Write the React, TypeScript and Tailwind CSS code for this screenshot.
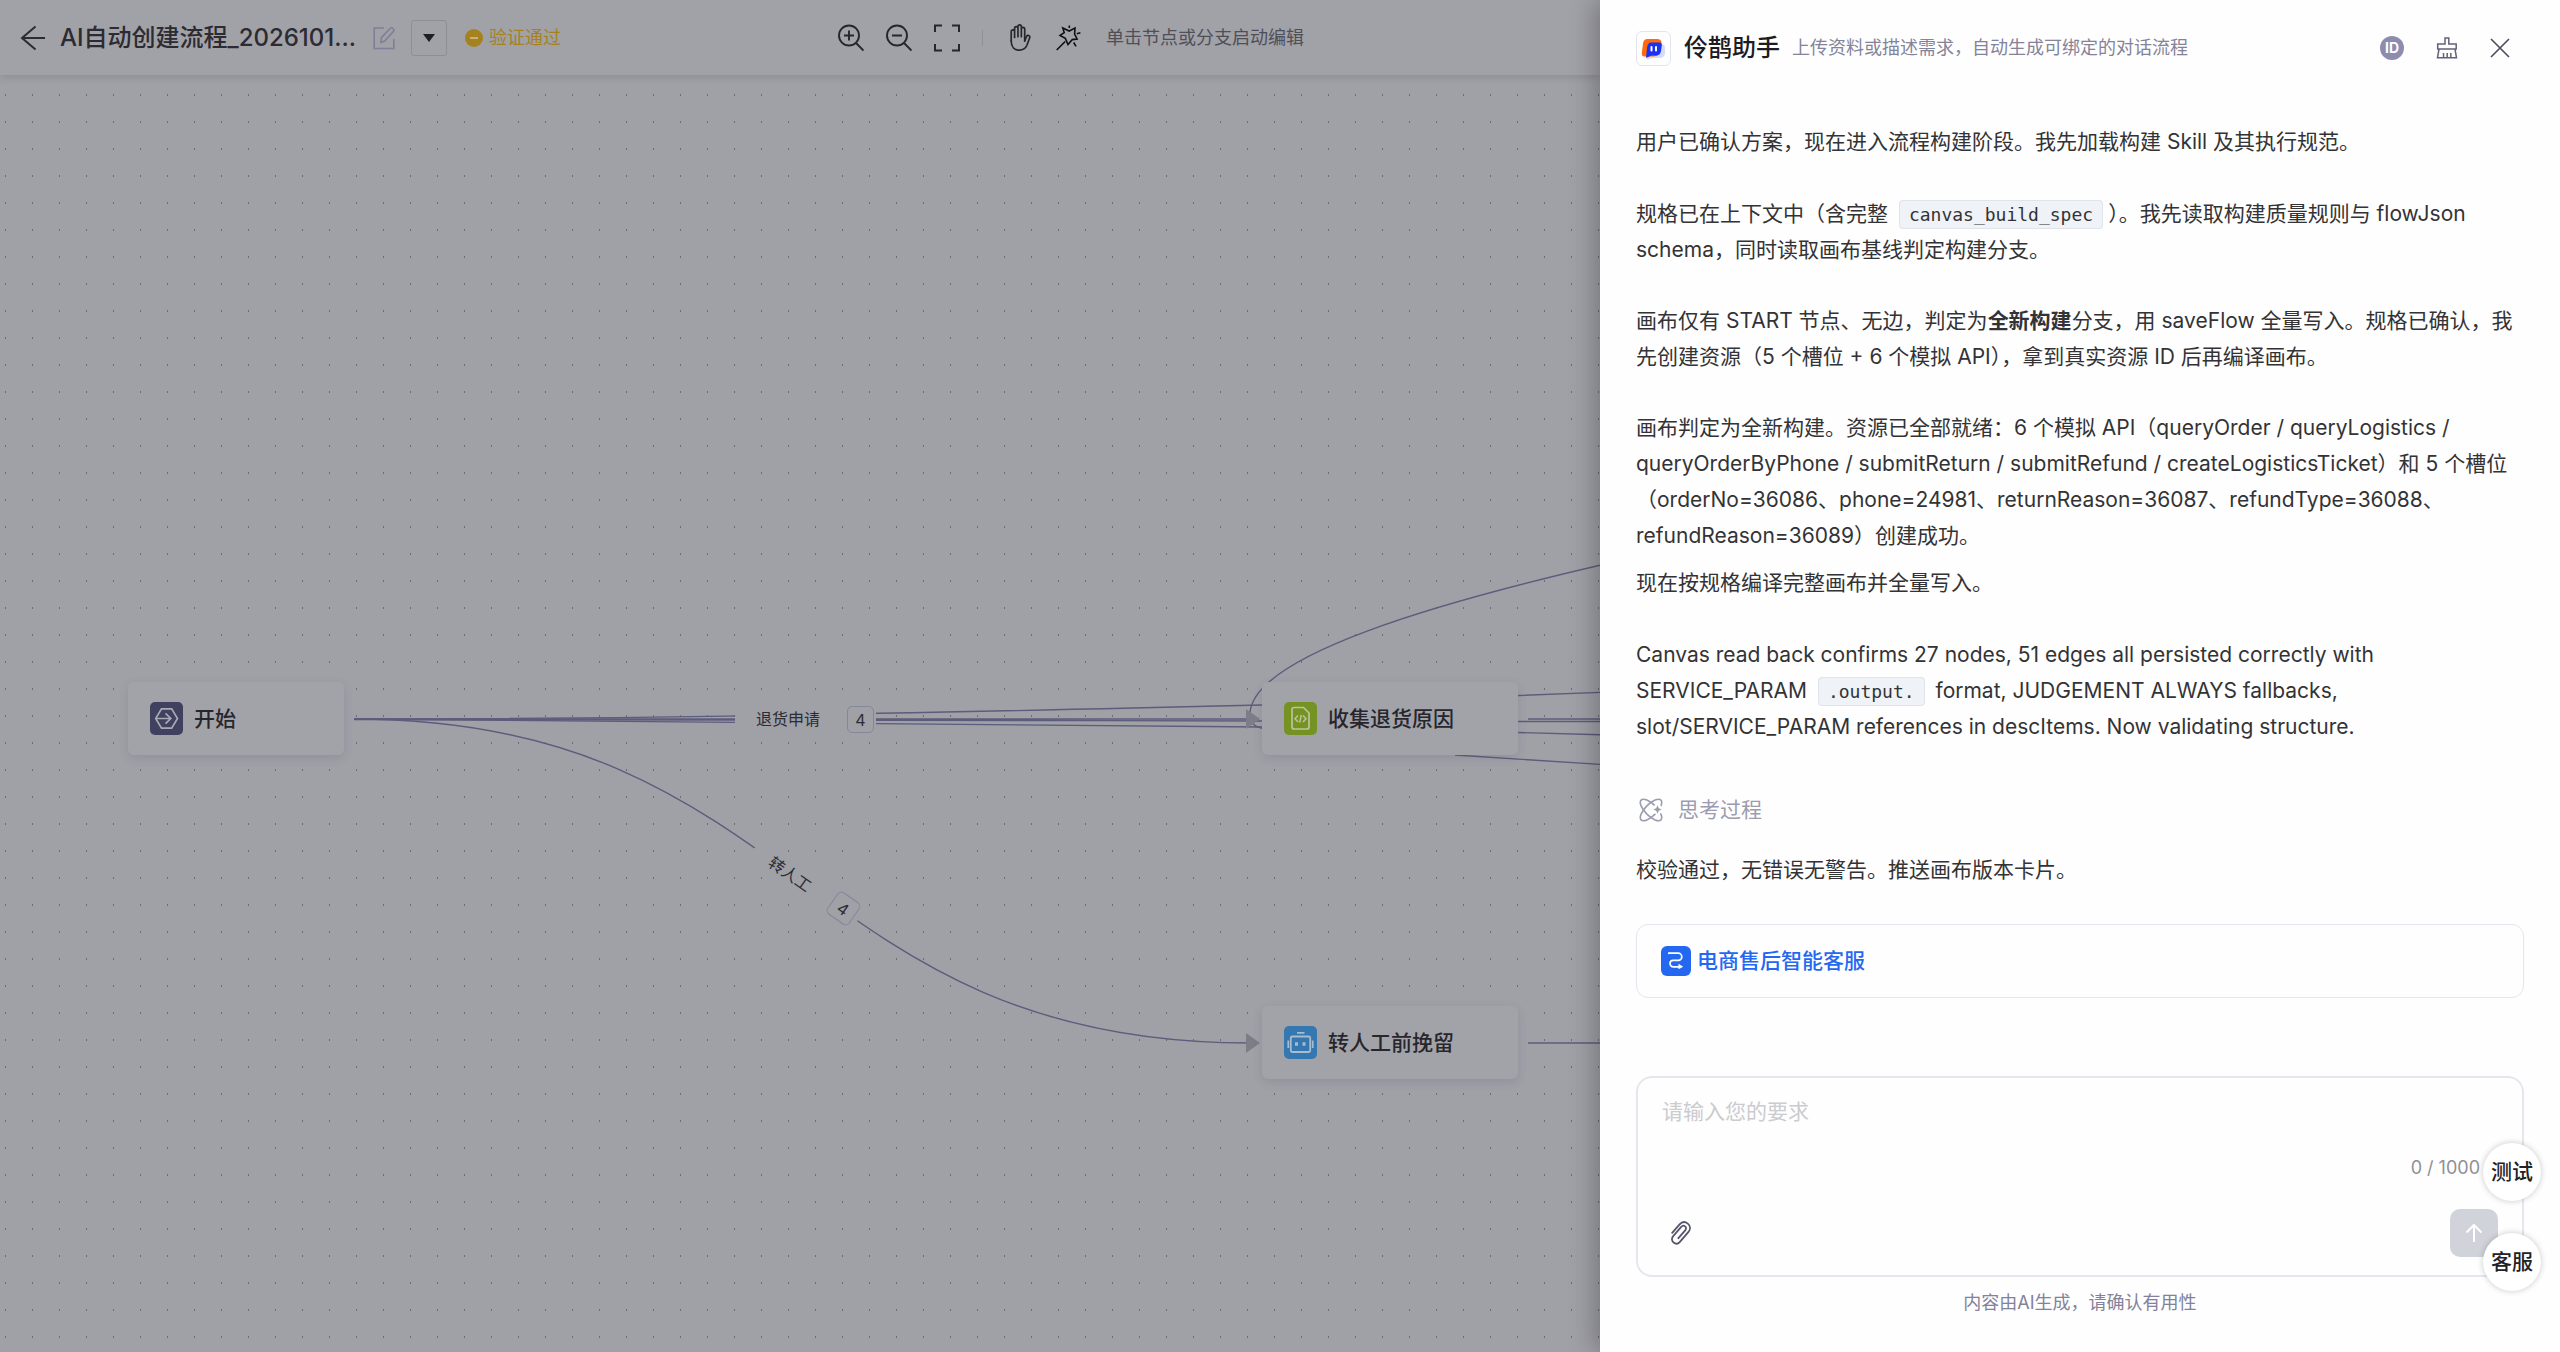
import type { ReactNode } from "react";
import { IoHandLeftOutline } from "react-icons/io5";

function ArrowLeftIcon() {
  return (
    <svg width="25" height="26" viewBox="0 0 25 26" fill="none" stroke="#2b2b31" strokeWidth="2">
      <path d="M15.500 1.500 2 13l13.500 11.500M2 13h23" />
    </svg>
  );
}

function EditIcon() {
  return (
    <svg width="22" height="24" viewBox="0 0 22 24" fill="none" stroke="#7f7f98" strokeWidth="1.6">
      <path d="M11 2H1.200v20.500h19.600V13" />
      <path d="m8 16.500.4-4.800L17.300 2.300a1.600 1.600 0 0 1 2.400 0l.7.7a1.600 1.600 0 0 1 0 2.400L11.700 15 8 16.500Z" />
    </svg>
  );
}

function ZoomIcon({ plus }: { plus?: boolean }) {
  return (
    <svg width="26" height="28" viewBox="0 0 26 28" fill="none" stroke="#26262b" strokeWidth="1.900">
      <circle cx="11" cy="11.500" r="10" />
      <path d="m18 19 7.500 7.500M6 11.500h10" />
      {plus && <path d="M11 6.500v10" />}
    </svg>
  );
}

function FullscreenIcon() {
  return (
    <svg width="26" height="28" viewBox="0 0 26 28" fill="none" stroke="#26262b" strokeWidth="2">
      <path d="M1 8V1.500h7M18 1.500h7V8M25 20v6.500h-7M8 26.500H1V20" />
    </svg>
  );
}

function WandIcon() {
  return (
    <svg width="25" height="26" viewBox="0 0 25 26" fill="none" stroke="#0e0e12" strokeWidth="1.600">
      <path d="m6.800 3 6.400 3 5.800-3-.4 6 2.500 5-4.800.6-4.300 5-2.700-6.200-5.300-3 4.200-2.800L6.800 3Z" />
      <path d="m.7 25 8.500-8.500M13.300.5v2.400M20.800 8.700l3.600-.9M17.700 17.500l2.300 3.800" />
    </svg>
  );
}

function LogoIcon() {
  return (
    <svg width="33" height="33" viewBox="0 0 33 33" fill="none">
      <path d="M11 12h13q4 0 4 4v5q0 5-6 5h-6l-6 1.500Z" fill="#d5dcf8" />
      <path d="M10.500 7H20q4.500 0 4.500 4L23 20q-2 4.500-7 4.500H7.500q-3 0-2.700-3.500L6 11.500Q6.500 7 10.500 7Z" fill="#ff6a0a" />
      <path d="M14 10.500h8.500q2.500 0 2.300 3L24 19q-.8 4.500-5 4.500h-4.500L9 26l1-10q.5-5.500 4-5.500Z" fill="#1a32f5" />
      <path d="M14.500 15v3.500M19 15v3.500" stroke="#fff" strokeWidth="2" strokeLinecap="round" />
    </svg>
  );
}

function BroomIcon() {
  return (
    <svg width="22" height="22" viewBox="0 0 22 22" fill="none" stroke="#62627a" strokeWidth="1.500">
      <path d="M9 7V1h3.800v6h7.400v5H1.700V7H9ZM3 12 1.500 20.800h19L19 12M7.500 20.500V16M11.200 20.500V16M14.800 20.500V16" />
    </svg>
  );
}

function CloseIcon() {
  return (
    <svg width="20" height="20" viewBox="0 0 20 20" fill="none" stroke="#4f4f5f" strokeWidth="1.700">
      <path d="m1 1 18 18M19 1 1 19" />
    </svg>
  );
}

function ThinkIcon() {
  return (
    <svg width="24" height="24" viewBox="0 0 24 24" fill="none" stroke="#9c9cb0" strokeWidth="1.600">
      <ellipse cx="12" cy="12" rx="14" ry="5.800" transform="rotate(45 12 12)" />
      <ellipse cx="12" cy="12" rx="14" ry="5.800" transform="rotate(-45 12 12)" />
      <circle cx="18.500" cy="11.500" r="5" fill="#fff" stroke="none" />
      <path d="m18.500 7.200 1.300 3 3 1.300-3 1.300-1.300 3-1.300-3-3-1.300 3-1.300 1.300-3Z" fill="#9c9cb0" stroke="none" />
    </svg>
  );
}

function FlowIcon() {
  return (
    <svg width="30" height="30" viewBox="0 0 30 30" fill="none" stroke="#fff" strokeWidth="1.700">
      <path d="M7.500 7.200h9.700a3.600 3.600 0 0 1 0 7.200h-5a3 3 0 0 0 0 6.400H18" />
      <path d="m17.500 17.700 4.700 3.100-4.700 2.400Z" fill="#fff" stroke="none" />
      <circle cx="8" cy="7.200" r="1" fill="#fff" stroke="none" />
    </svg>
  );
}

function PaperclipIcon() {
  return (
    <svg width="22" height="24" viewBox="0 0 22 24" fill="none" stroke="#55556b" strokeWidth="1.800" strokeLinecap="round">
      <path d="M2.200 11.800 9.600 3.400c2.300-2.600 5.500-3 8.200-.8 2.700 2.300 2.900 5.600.7 8.200l-8.600 10c-1.800 2.100-4.300 2.300-6.300.7-2-1.700-2.200-4.200-.4-6.300l8-9.300c1.200-1.400 2.700-1.500 3.900-.5 1.200 1 1.300 2.500.1 3.900l-6.800 7.900" />
    </svg>
  );
}

function SendIcon() {
  return (
    <svg width="18" height="20" viewBox="0 0 18 20" fill="none" stroke="#fff" strokeWidth="2">
      <path d="M9 19V2M1.500 9.500 9 2l7.500 7.500" />
    </svg>
  );
}

function StartNodeIcon() {
  return (
    <svg width="33" height="33" viewBox="0 0 33 33" fill="none" stroke="#a9a9b5" strokeWidth="1.700">
      <path d="M11.500 6.800h10.200L27.500 16.500l-5.800 9.700H11.500L5.700 16.500l5.800-9.700ZM6 16.500h14.500M15.500 11.300l5.300 5.200-5.300 5.200" />
    </svg>
  );
}

function CodeNodeIcon() {
  return (
    <svg width="33" height="33" viewBox="0 0 33 33" fill="none" stroke="#bdc49b" strokeWidth="1.700">
      <path d="M10 5.500h9.500l5.500 5.500v14q0 2-2 2H10q-2 0-2-2V7.500q0-2 2-2Z" />
      <path d="m14 13.500-3 3.200 3 3.200M19 13.500l3 3.200-3 3.200M17.300 12.800l-1.600 7.800" strokeWidth="1.500" />
    </svg>
  );
}

function RobotNodeIcon() {
  return (
    <svg width="33" height="33" viewBox="0 0 33 33" fill="none" stroke="#a8bccd" strokeWidth="1.800">
      <rect x="6.800" y="10.500" width="19.400" height="15.500" rx="1.500" />
      <path d="M13 6.800h7.500M4.300 14.500v7.500M28.700 14.500v7.500" />
      <path d="M12.500 16.300v3.500M20 16.300v3.500" strokeWidth="3" />
    </svg>
  );
}

type FlowNodeProps = { place: string; tone: string; icon: ReactNode; label: string };

function FlowNode({ place, tone, icon, label }: FlowNodeProps) {
  return (
    <div
      className={`absolute flex h-[73px] items-center gap-[11px] rounded-md bg-[#a2a2a9] pl-[22px] shadow-[0_3px_10px_rgba(70,75,90,0.16)] ${place}`}
    >
      <span className={`overflow-hidden rounded-[5px] ${tone}`}>{icon}</span>
      <span className="text-[21px] leading-[30px] font-medium text-[#26262c]">{label}</span>
    </div>
  );
}

function EdgeCount({ className, children }: { className: string; children: ReactNode }) {
  return (
    <span
      className={`absolute flex size-[27px] items-center justify-center rounded-[5px] border border-[#86869a] bg-[#a0a0a7] text-base text-[#2c2c33] ${className}`}
    >
      {children}
    </span>
  );
}

function FlowCanvas() {
  return (
    <div className="relative min-h-0 flex-1 overflow-hidden">
      <svg className="absolute inset-0 h-full w-full" fill="none">
        <defs>
          <pattern id="dots" width="27" height="27" patternUnits="userSpaceOnUse">
            <rect x="5" y="19" width="1" height="2" fill="#6c6c74" />
          </pattern>
        </defs>
        <rect width="100%" height="100%" fill="url(#dots)" />
        <g stroke="#5c5c7c" strokeWidth="1.400">
          <path d="M354 644C600 644 800 641 1262 630M1518 620.500 1610 617" />
          <path d="M354 644H1248M354 644.500C800 644.500 1000 645.500 1262 646M1518 646.500H1610M1528 644H1610" />
          <path d="M354 644C600 645 900 647 1262 652M1518 657.500 1610 660" />
          <path d="M354 644C801 644 801 968 1250 968M1528 968H1610" />
          <path d="M1610 488C1440 527 1254 580 1250 638C1250 650 1256 653 1270 655M1455 680 1610 690" />
        </g>
        <path d="M1246 634v20l14-10ZM1246 958v20l14-10Z" fill="#7d7d88" />
      </svg>

      <span className="absolute top-[629px] left-[735px] flex h-[29px] w-[141px] items-center bg-[#a0a0a7] pl-[21px] text-base text-[#2c2c33]">
        退货申请
      </span>
      <EdgeCount className="top-[631px] left-[847px]">4</EdgeCount>

      <span className="absolute top-[795px] left-[743px] flex h-[29px] w-[126px] rotate-[35deg] items-center bg-[#a0a0a7] pl-[20px] text-base text-[#2c2c33]">
        转人工
      </span>
      <EdgeCount className="top-[820px] left-[830px] rotate-[35deg]">4</EdgeCount>

      <FlowNode place="top-[607px] left-[128px] w-[216px]" tone="bg-[#40405f]" icon={<StartNodeIcon />} label="开始" />
      <FlowNode place="top-[607px] left-[1262px] w-[256px]" tone="bg-[#749322]" icon={<CodeNodeIcon />} label="收集退货原因" />
      <FlowNode place="top-[931px] left-[1262px] w-[256px]" tone="bg-[#3577b0]" icon={<RobotNodeIcon />} label="转人工前挽留" />
    </div>
  );
}

function Toolbar() {
  return (
    <header className="relative z-10 flex h-[75px] shrink-0 items-center bg-[#a1a1a8] pl-5 shadow-[0_2px_8px_rgba(60,60,70,0.2)]">
      <button aria-label="返回"><ArrowLeftIcon /></button>
      <h1 className="ml-[15px] w-[297px] text-2xl font-medium whitespace-nowrap text-[#2b2b31]">
        AI自动创建流程_2026101...
      </h1>
      <button aria-label="编辑名称" className="ml-4"><EditIcon /></button>
      <button
        aria-label="更多版本"
        className="ml-4 flex h-9 w-9 items-center justify-center rounded-[3px] border border-[#8e8e95]"
      >
        <svg width="12" height="8" viewBox="0 0 12 8" fill="#1f1f25"><path d="M0 0h12L6 8Z" /></svg>
      </button>
      <span className="ml-[18px] flex items-center gap-[6px] text-lg whitespace-nowrap text-[#a5821d]">
        <svg width="18" height="18" viewBox="0 0 18 18">
          <circle cx="9" cy="9" r="9" fill="#a5821d" />
          <path d="M5 9h8" stroke="#c9b98a" strokeWidth="1.800" />
        </svg>
        验证通过
      </span>
      <div className="ml-[277px] flex items-center gap-[22px]">
        <button aria-label="放大"><ZoomIcon plus /></button>
        <button aria-label="缩小"><ZoomIcon /></button>
        <button aria-label="适应画布"><FullscreenIcon /></button>
        <span className="h-4 w-px bg-[#8f8f96]" />
        <div className="ml-[2px] flex items-center gap-[22px]">
          <button aria-label="拖动画布"><IoHandLeftOutline size={27} color="#26262b" /></button>
          <button aria-label="自动整理"><WandIcon /></button>
        </div>
        <span className="ml-[3px] text-lg whitespace-nowrap text-[#4f4f57]">单击节点或分支启动编辑</span>
      </div>
    </header>
  );
}

function Code({ children }: { children: ReactNode }) {
  return (
    <code className="mx-[5px] rounded border border-[#dfe3ea] bg-[#eff2f7] px-[9px] py-[3px] font-['DejaVu_Sans_Mono',monospace] text-lg leading-[21px]">
      {children}
    </code>
  );
}

function AssistantPanel() {
  return (
    <aside className="relative z-20 flex w-[37.5%] shrink-0 flex-col bg-[#fefefe] px-9 shadow-[-6px_0_24px_rgba(0,0,0,0.26)]">
      <header className="flex h-24 shrink-0 items-center">
        <span className="rounded-md border border-[#e4e4ee]"><LogoIcon /></span>
        <h2 className="ml-[13px] text-2xl font-medium whitespace-nowrap text-[#1c1c22]">伶鹊助手</h2>
        <p className="ml-3 text-lg whitespace-nowrap text-[#83839a]">上传资料或描述需求，自动生成可绑定的对话流程</p>
        <div className="mr-[14px] ml-auto flex items-center gap-8">
          <button
            aria-label="会话 ID"
            className="flex size-6 items-center justify-center rounded-full bg-[#8c8cae] text-sm font-bold text-white"
          >
            ID
          </button>
          <button aria-label="清空对话"><BroomIcon /></button>
          <button aria-label="关闭"><CloseIcon /></button>
        </div>
      </header>

      <section className="min-h-0 flex-1 overflow-hidden pt-7 text-[21px] leading-[36px] text-[#333336]">
        <p>用户已确认方案，现在进入流程构建阶段。我先加载构建 Skill 及其执行规范。</p>
        <p className="mt-9">
          规格已在上下文中（含完整 <Code>canvas_build_spec</Code>）。我先读取构建质量规则与 flowJson
          schema，同时读取画布基线判定构建分支。
        </p>
        <p className="mt-[35px]">
          画布仅有 START 节点、无边，判定为<strong className="font-bold">全新构建</strong>分支，用 saveFlow
          全量写入。规格已确认，我先创建资源（5 个槽位 + 6 个模拟 API），拿到真实资源 ID 后再编译画布。
        </p>
        <p className="mt-[35px]">
          画布判定为全新构建。资源已全部就绪：6 个模拟 API（queryOrder / queryLogistics / queryOrderByPhone /
          submitReturn / submitRefund / createLogisticsTicket）和 5 个槽位（orderNo=36086、phone=24981、returnReason=36087、refundType=36088、refundReason=36089）创建成功。
        </p>
        <p className="mt-[11px]">现在按规格编译完整画布并全量写入。</p>
        <p className="mt-9">
          Canvas read back confirms 27 nodes, 51 edges all persisted correctly with SERVICE_PARAM{" "}
          <Code>.output.</Code> format, JUDGEMENT ALWAYS fallbacks, slot/SERVICE_PARAM references in descItems. Now
          validating structure.
        </p>
        <button className="mt-[47px] flex items-center gap-[15px] pl-[3px] text-[#9c9cb0]">
          <ThinkIcon />
          思考过程
        </button>
        <p className="mt-6">校验通过，无错误无警告。推送画布版本卡片。</p>
        <button className="mt-9 flex h-[74px] w-full items-center gap-[6px] rounded-xl border border-[#e6e6f0] px-6 font-medium text-[#2468f2]">
          <span className="rounded-md bg-[#2468f2]"><FlowIcon /></span>
          电商售后智能客服
        </button>
      </section>

      <form className="relative flex h-[201px] shrink-0 flex-col rounded-2xl border-2 border-[#e6e6ee] px-6 pt-4 pb-[18px]">
        <textarea
          aria-label="您的要求"
          placeholder="请输入您的要求"
          className="h-[62px] w-full resize-none bg-transparent text-[21px] leading-[36px] outline-none placeholder:text-[#cbcbd0]"
        />
        <span className="mr-[18px] self-end text-lg leading-6 text-[#8f8f96]">0 / 1000</span>
        <div className="mt-auto flex items-center justify-between pl-2">
          <button type="button" aria-label="上传附件"><PaperclipIcon /></button>
          <button
            type="button"
            aria-label="发送"
            className="flex size-12 items-center justify-center rounded-[10px] bg-[#d0d3d9]"
          >
            <SendIcon />
          </button>
        </div>
      </form>
      <p className="mt-[14px] mb-[37px] shrink-0 text-center text-lg leading-6 text-[#82829a]">
        内容由AI生成，请确认有用性
      </p>

      <div className="absolute right-[19px] bottom-[61px] flex flex-col gap-8 text-[21px] font-medium text-[#222226]">
        <button className="size-[58px] rounded-full bg-white whitespace-nowrap shadow-[0_0_6px_rgba(0,0,0,0.22)]">测试</button>
        <button className="size-[58px] rounded-full bg-white whitespace-nowrap shadow-[0_0_6px_rgba(0,0,0,0.22)]">客服</button>
      </div>
    </aside>
  );
}

export default function App() {
  return (
    <div
      lang="zh-CN"
      className="flex h-screen overflow-hidden bg-[#a0a0a7] font-['Inter','Noto_Sans_CJK_SC',sans-serif]"
    >
      <main className="flex min-w-0 flex-1 flex-col">
        <Toolbar />
        <FlowCanvas />
      </main>
      <AssistantPanel />
    </div>
  );
}
